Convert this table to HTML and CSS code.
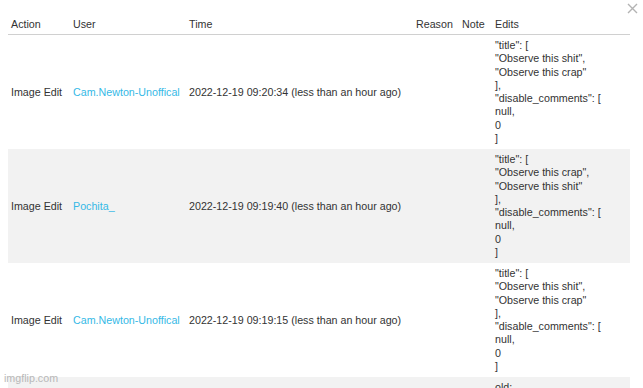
FILE: index.html
```html
<!DOCTYPE html>
<html>
<head>
<meta charset="utf-8">
<link rel="stylesheet" href="styles.css">
</head>
<body>
<div class="page">
  <div class="log">
    <div class="row head">
      <div class="cell">Action</div>
      <div class="cell">User</div>
      <div class="cell">Time</div>
      <div class="cell">Reason</div>
      <div class="cell">Note</div>
      <div class="cell">Edits</div>
    </div>
    <div class="row">
      <div class="cell">Image Edit</div>
      <div class="cell"><a class="user">Cam.Newton-Unoffical</a></div>
      <div class="cell">2022-12-19 09:20:34 (less than an hour ago)</div>
      <div class="cell"></div>
      <div class="cell"></div>
      <div class="cell edits">"title": [<br>"Observe this shit",<br>"Observe this crap"<br>],<br>"disable_comments": [<br>null,<br>0<br>]</div>
    </div>
    <div class="row alt">
      <div class="cell">Image Edit</div>
      <div class="cell"><a class="user">Pochita_</a></div>
      <div class="cell">2022-12-19 09:19:40 (less than an hour ago)</div>
      <div class="cell"></div>
      <div class="cell"></div>
      <div class="cell edits">"title": [<br>"Observe this crap",<br>"Observe this shit"<br>],<br>"disable_comments": [<br>null,<br>0<br>]</div>
    </div>
    <div class="row">
      <div class="cell">Image Edit</div>
      <div class="cell"><a class="user">Cam.Newton-Unoffical</a></div>
      <div class="cell">2022-12-19 09:19:15 (less than an hour ago)</div>
      <div class="cell"></div>
      <div class="cell"></div>
      <div class="cell edits">"title": [<br>"Observe this shit",<br>"Observe this crap"<br>],<br>"disable_comments": [<br>null,<br>0<br>]</div>
    </div>
    <div class="row alt">
      <div class="cell">Image Edit</div>
      <div class="cell"><a class="user">Pochita_</a></div>
      <div class="cell">2022-12-19 09:18:02 (less than an hour ago)</div>
      <div class="cell"></div>
      <div class="cell"></div>
      <div class="cell edits">old:<br>"title": [<br>"Observe this"<br>],<br>new:<br>"title": [<br>"Observe this shit"<br>],<br>"disable_comments": [<br>null,<br>0<br>]</div>
    </div>
  </div>
  <svg class="close" width="11" height="11" viewBox="0 0 11 11"><path d="M1 1 L10 10 M10 1 L1 10" stroke="#b3b3b3" stroke-width="1.4" fill="none"/></svg>
  <div class="watermark">imgflip.com</div>
</div>
</body>
</html>
```

FILE: styles.css
```css
html, body {
  margin: 0;
  padding: 0;
  background: #fff;
  overflow: hidden;
}
.page {
  position: relative;
  width: 643px;
  height: 388px;
  overflow: hidden;
  padding: 14px 13px 0 8px;
  box-sizing: border-box;
  font-family: "Liberation Sans", Arial, sans-serif;
  font-size: 10.7px;
  color: #333;
}
.log {
  width: 622px;
}
.row {
  display: grid;
  grid-template-columns: 62px 116px 227px 46px 33px 138px;
  align-items: center;
}
.row.alt {
  background: #f2f2f2;
}
.head {
  height: 20px;
  border-bottom: 1px solid #d0d0d0;
}
.cell {
  padding: 0 3px;
  white-space: nowrap;
}
.edits {
  padding: 4px 3px;
  line-height: 13.25px;
}
.user {
  color: #35b9e6;
  text-decoration: none;
}
.close {
  position: absolute;
  top: 3px;
  right: 5px;
}
.watermark {
  position: absolute;
  left: 4px;
  top: 372px;
  font-size: 10.7px;
  color: #b8b8b8;
}
```
